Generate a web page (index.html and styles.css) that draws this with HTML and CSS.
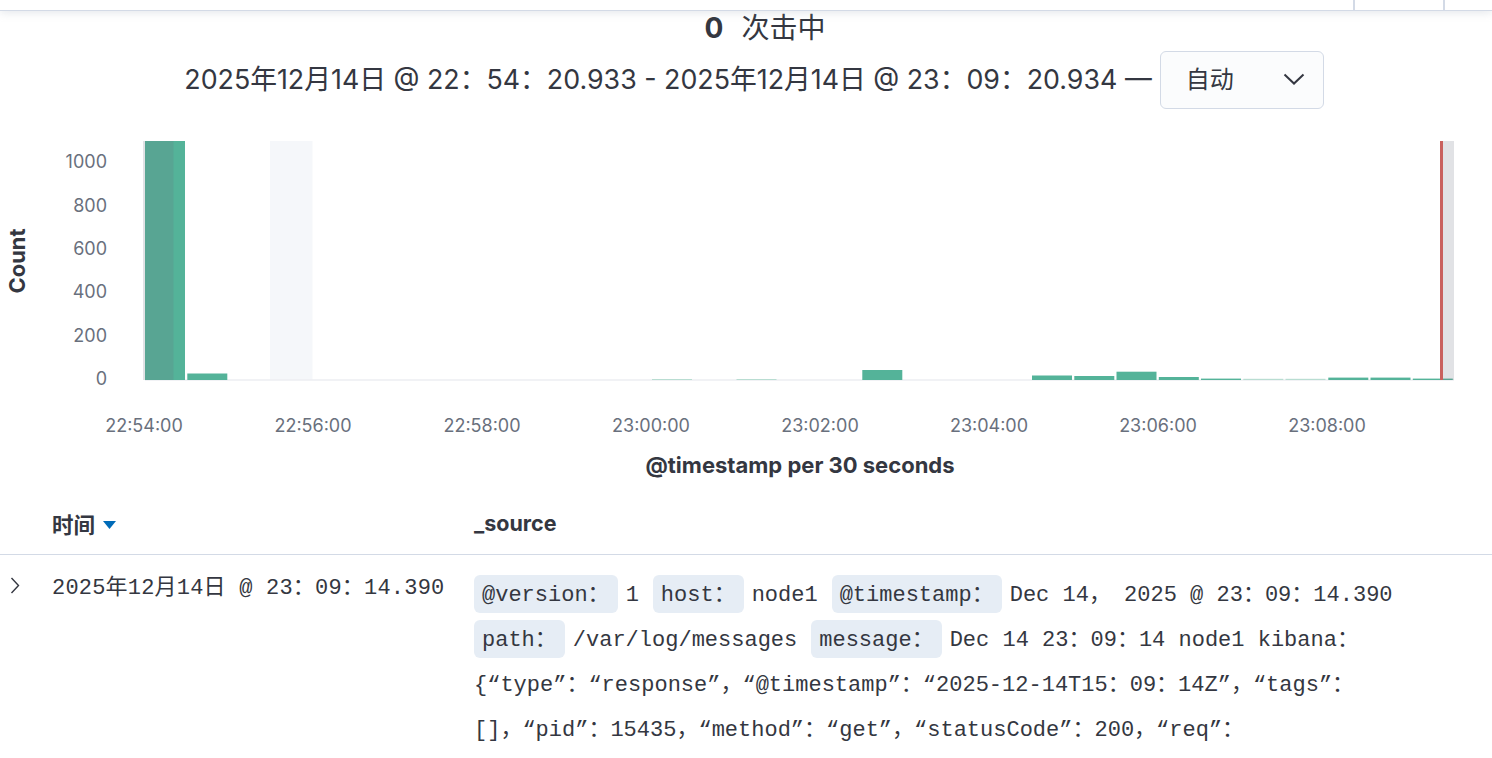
FILE: index.html
```html
<!DOCTYPE html>
<html lang="zh">
<head>
<meta charset="utf-8">
<title>Discover</title>
<link rel="stylesheet" href="styles.css">
</head>
<body>
<div class="topbar">
  <div class="tb-spacer"></div>
  <div class="tb-cell"></div>
  <div class="tb-cell tb-last"></div>
</div>

<div class="hits"><strong class="hits-num">0</strong><span class="hits-label">次击中</span></div>

<div class="range">
  <span class="range-text">2025年12月14日 @ 22：54：20.933 - 2025年12月14日 @ 23：09：20.934 —</span>
  <button class="interval">
    <span class="interval-label">自动</span>
    <svg class="interval-chev" width="22" height="12" viewBox="0 0 22 12"><path d="M1.5 1.5 L11 10.5 L20.5 1.5" fill="none" stroke="#343741" stroke-width="2"/></svg>
  </button>
</div>

<svg class="chart" width="1492" height="370" viewBox="0 120 1492 370">
  <rect x="270" y="141" width="42.5" height="239" fill="#f5f7fa"/>
  <line x1="145" y1="380" x2="1454" y2="380" stroke="#eceef2" stroke-width="1.5"/>
  <g fill="#54b399">
    <rect x="145" y="141" width="40" height="239"/>
    <rect x="187.3" y="373.5" width="40" height="6.5"/>
    <rect x="862.3" y="370" width="40" height="10"/>
    <rect x="1032" y="375.5" width="40" height="4.5"/>
    <rect x="1074.3" y="376" width="40" height="4"/>
    <rect x="1116.5" y="371.7" width="40" height="8.3"/>
    <rect x="1158.8" y="377" width="40" height="3"/>
    <rect x="1201" y="378.6" width="40" height="1.4"/>
    <rect x="1328.3" y="377.6" width="40" height="2.4"/>
    <rect x="1370.5" y="377.6" width="40" height="2.4"/>
    <rect x="1412.8" y="378.6" width="40" height="1.4"/>
  </g>
  <g fill="#b9ddd2">
    <rect x="652" y="379" width="40" height="1"/>
    <rect x="736.5" y="379" width="40" height="1"/>
    <rect x="1243.3" y="378.8" width="40" height="1.2"/>
    <rect x="1285.5" y="378.8" width="40" height="1.2"/>
  </g>
  <rect x="143" y="141" width="30.5" height="239" fill="rgba(105,112,125,0.2)"/>
  <rect x="1443" y="141" width="11" height="239" fill="rgba(105,112,125,0.2)"/>
  <rect x="1440" y="141" width="3" height="239" fill="#c9615e"/>
  <g class="ylab" text-anchor="end">
    <text x="107" y="161">1000</text>
    <text x="107" y="205">800</text>
    <text x="107" y="248">600</text>
    <text x="107" y="291">400</text>
    <text x="107" y="335">200</text>
    <text x="107" y="378">0</text>
  </g>
  <text class="ytitle" transform="translate(17 261) rotate(-90)" text-anchor="middle">Count</text>
  <g class="xlab" text-anchor="middle">
    <text x="144" y="425">22:54:00</text>
    <text x="313" y="425">22:56:00</text>
    <text x="482" y="425">22:58:00</text>
    <text x="651" y="425">23:00:00</text>
    <text x="820" y="425">23:02:00</text>
    <text x="989" y="425">23:04:00</text>
    <text x="1158" y="425">23:06:00</text>
    <text x="1327" y="425">23:08:00</text>
  </g>
  <text class="xtitle" x="800" y="465" text-anchor="middle">@timestamp per 30 seconds</text>
</svg>

<div class="doc-table">
  <div class="thead">
    <div class="col-toggle"></div>
    <div class="col-time th">时间<svg class="sort-caret" width="13" height="8" viewBox="0 0 13 8"><path d="M0 0 H13 L6.5 8 Z" fill="#006bb8"/></svg></div>
    <div class="col-source th">_source</div>
  </div>
  <div class="trow">
    <div class="col-toggle"><svg class="row-chev" width="10" height="17" viewBox="0 0 10 17"><path d="M1.5 1 L8.5 8.5 L1.5 16" fill="none" stroke="#343741" stroke-width="1.4"/></svg></div>
    <div class="col-time mono time-cell">2025年12月14日 @ 23：09：14.390</div>
    <div class="col-source mono">
      <div class="src-line"><span class="dt">@version：</span><span class="dd">1</span><span class="dt">host：</span><span class="dd">node1</span><span class="dt">@timestamp：</span><span class="dd">Dec 14， 2025 @ 23：09：14.390</span></div>
      <div class="src-line"><span class="dt">path：</span><span class="dd">/var/log/messages</span><span class="dt">message：</span><span class="dd">Dec 14 23：09：14 node1 kibana：</span></div>
      <div class="src-line"><span class="dd">{“type”：“response”，“@timestamp”：“2025-12-14T15：09：14Z”，“tags”：</span></div>
      <div class="src-line"><span class="dd">[]，“pid”：15435，“method”：“get”，“statusCode”：200，“req”：</span></div>
    </div>
  </div>
</div>
</body>
</html>
```
FILE: styles.css
```css
html, body {
  margin: 0;
  padding: 0;
  background: #ffffff;
  color: #343741;
  font-family: "Inter", "Noto Sans CJK SC", sans-serif;
  overflow: hidden;
}

.topbar {
  display: flex;
  height: 10px;
  border-bottom: 1px solid #d3dae6;
  box-shadow: 0 2px 8px rgba(152, 162, 179, 0.25);
  background: #ffffff;
  position: relative;
  z-index: 1;
}
.tb-spacer { flex: 1; }
.tb-cell {
  width: 88px;
  border-left: 2px solid #d3dae6;
}
.tb-last { width: 47px; }

.hits {
  display: flex;
  justify-content: center;
  align-items: center;
  gap: 18px;
  padding-left: 38px;
  height: 34px;
  font-size: 28px;
  line-height: 34px;
}
.hits-num { font-weight: 700; }

.range {
  display: flex;
  justify-content: center;
  align-items: center;
  gap: 8px;
  margin-top: 6px;
  padding-left: 16px;
  height: 58px;
}
.range-text {
  font-size: 26.8px;
  white-space: nowrap;
  padding-bottom: 6px;
}
.interval {
  display: flex;
  align-items: center;
  justify-content: space-between;
  width: 164px;
  height: 58px;
  padding: 0 18px 0 25px;
  background: #fbfcfd;
  border: 1px solid #d3dae6;
  border-radius: 6px;
  font-family: "Inter", "Noto Sans CJK SC", sans-serif;
  font-size: 24px;
  color: #343741;
  box-sizing: border-box;
}
.interval-label {
  padding-bottom: 5px;
}
.interval-chev {
  margin-bottom: 2px;
}

.chart {
  display: block;
  margin-top: 11px;
}
.ylab text, .xlab text {
  font-family: "Inter", sans-serif;
  font-size: 18px;
  fill: #69707d;
  dominant-baseline: central;
}
.ytitle, .xtitle {
  font-family: "Inter", sans-serif;
  font-size: 22px;
  font-weight: 700;
  fill: #343741;
  dominant-baseline: central;
}

.thead, .trow {
  display: flex;
}
.thead {
  height: 64px;
  align-items: center;
  border-bottom: 1px solid #d3dae6;
}
.th {
  font-size: 21.5px;
  font-weight: 700;
  padding-top: 2px;
}
.col-toggle {
  width: 52px;
  flex: none;
}
.col-time {
  width: 422px;
  flex: none;
  display: flex;
  align-items: center;
}
.col-source {
  flex: 1;
}
.sort-caret {
  margin-left: 8px;
  margin-top: 4px;
}
.mono {
  font-family: "Liberation Mono", "Noto Sans CJK SC", monospace;
  font-size: 22px;
}
.trow .col-toggle {
  padding: 22px 0 0 10px;
  box-sizing: border-box;
}
.row-chev { display: block; }
.time-cell {
  align-items: flex-start;
  padding-top: 19px;
  line-height: 30px;
  white-space: pre;
  letter-spacing: 0.2px;
}
.trow .col-source {
  padding-top: 16px;
}
.src-line {
  display: flex;
  align-items: center;
  height: 45px;
  line-height: 30px;
  white-space: pre;
}
.dt, .dd {
  display: flex;
  align-items: center;
  height: 38px;
  padding-top: 4px;
  box-sizing: border-box;
  line-height: 30px;
}
.dt {
  padding-left: 8px;
  padding-right: 8px;
  margin-right: 8px;
  background: #e6edf5;
  border-radius: 6px;
}
.dd {
  margin-right: 14px;
}
```
